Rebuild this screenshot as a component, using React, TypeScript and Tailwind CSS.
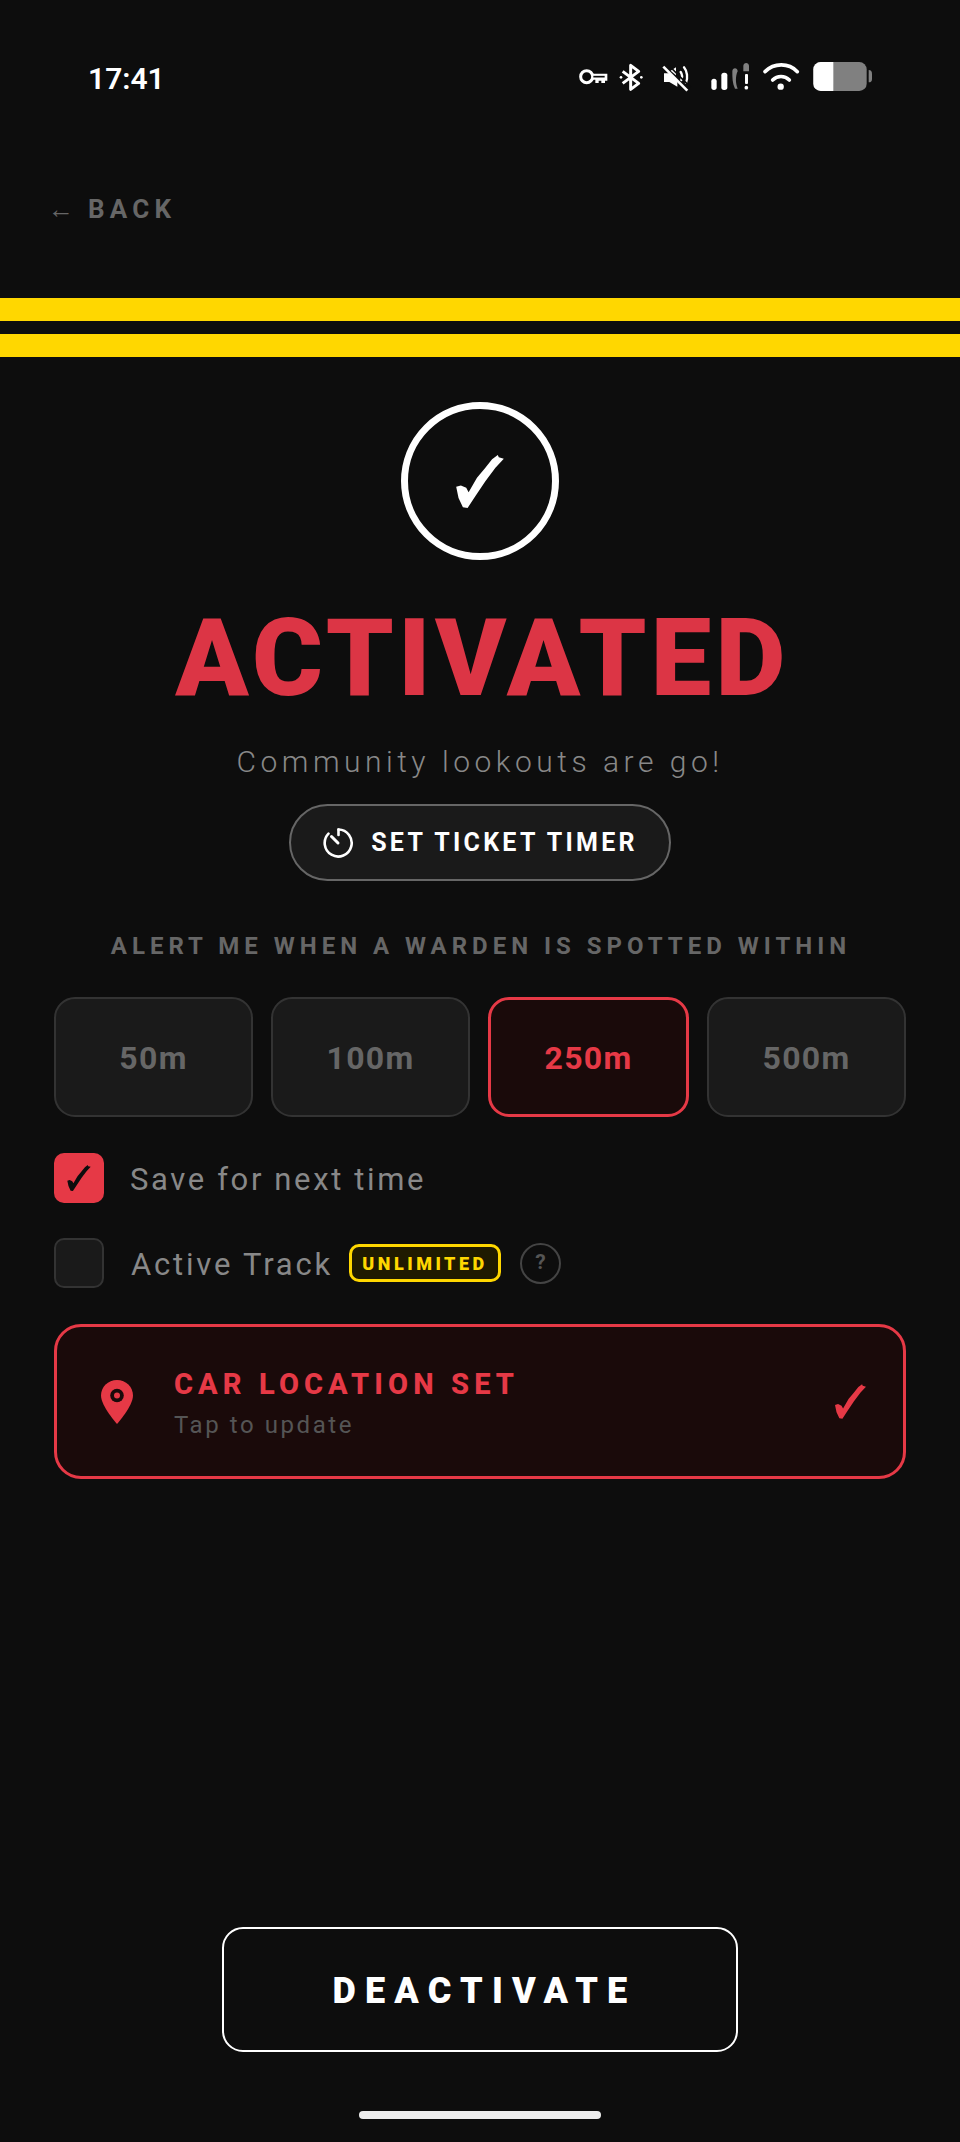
const red = "#e63946";

function StatusIcons() {
  return (
    <svg width="330" height="60" viewBox="0 0 990 180" fill="none">
      {/* key */}
      <circle cx="80" cy="80" r="18" stroke="#fff" strokeWidth="9" />
      <path d="M98 71H142V92H135V99H124V92H116V99H106V89H98Z" fill="#fff" />
      <path d="M100 80H134" stroke="#0d0d0d" strokeWidth="5" />
      {/* bluetooth */}
      <path d="M188 64L236 100L212 118V46L236 64L188 100" stroke="#fff" strokeWidth="9" strokeLinejoin="round" />
      <circle cx="183" cy="82" r="4" fill="#fff" />
      <circle cx="244" cy="82" r="4" fill="#fff" />
      {/* muted */}
      <path d="M312 70H328L352 94V110L328 96H312Z" fill="#fff" />
      <path d="M332 62L348 52V76Z" fill="#fff" />
      <path d="M362 66C366 72 367 82 364 90M372 52C382 64 384 84 378 98" stroke="#fff" strokeWidth="7" strokeLinecap="round" />
      <path d="M310 50L382 122" stroke="#fff" strokeWidth="8" />
      <path d="M322 42L392 112" stroke="#0d0d0d" strokeWidth="5" />
      {/* signal */}
      <rect x="454" y="86" width="16" height="34" rx="8" fill="#fff" />
      <rect x="484" y="68" width="18" height="52" rx="8" fill="#fff" />
      <path d="M517 64C517 52 533 52 533 64C526 78 526 100 533 116H525C517 100 517 82 517 64Z" fill="#808080" />
      <path d="M550 48C550 36 567 36 567 48V64H550Z" fill="#808080" />
      <rect x="555" y="72" width="9" height="30" rx="3" fill="#fff" />
      <circle cx="559" cy="113" r="5.5" fill="#fff" />
      {/* wifi */}
      <path d="M615 65C642 38 686 38 712 65M638 90C652 76 674 76 688 90" stroke="#fff" strokeWidth="11" strokeLinecap="round" />
      <circle cx="662" cy="110" r="9.5" fill="#fff" />
      {/* battery */}
      <rect x="760" y="36" width="160" height="87" rx="22" fill="#808080" />
      <path d="M782 36H820V123H782A22 22 0 0 1 760 101V58A22 22 0 0 1 782 36Z" fill="#fff" />
      <path d="M926 60C933 60 936 64 936 72V86C936 94 933 97 926 97Z" fill="#808080" />
    </svg>
  );
}

function TimerIcon() {
  return (
    <svg width="32" height="32" viewBox="0 0 32 32" fill="none">
      <path d="M16.5 2.5A13.5 13.5 0 1 1 6.5 6.6" stroke="#fff" strokeWidth="2.6" strokeLinecap="round" />
      <path d="M16.5 2.5V8" stroke="#fff" strokeWidth="2.6" strokeLinecap="round" />
      <path d="M9.5 9.5L16 16" stroke="#fff" strokeWidth="3" strokeLinecap="round" />
    </svg>
  );
}

function PinIcon() {
  return (
    <svg width="32" height="44" viewBox="0 0 32 44" className="shrink-0">
      <path d="M16 0C7 0 0 7 0 15.500C0 26 16 44 16 44S32 26 32 15.500C32 7 25 0 16 0Z" fill={red} />
      <circle cx="16" cy="15.500" r="6.800" fill="#1a0a0a" />
      <circle cx="16" cy="15.500" r="3" fill={red} />
    </svg>
  );
}

// brush style tick, the font's own glyph is too thin
function Tick({ color, width, height }: { color: string; width: number; height: number }) {
  return (
    <svg width={width} height={height} viewBox="48 47 142 158" className="shrink-0">
      <path d="M172 47L175 54L190 58L165 85L135 125L105 170L82 205L68 203L55 175L48 142L62 138L78 145L85 158L110 115L135 85L155 60Z" fill={color} />
    </svg>
  );
}

function Distance({ label, active }: { label: string; active?: boolean }) {
  return (
    <button className={`flex h-[120px] flex-1 basis-0 items-center justify-center rounded-[21px] pt-[2px] text-[32px] font-bold tracking-[0.04em] ${active ? "border-[3px] border-[#e63946] bg-[#1a0a0a] text-[#e63946]" : "border-[2px] border-[#333] bg-[#1a1a1a] text-[#666]"}`}>
      {label}
    </button>
  );
}

export default function App() {
  return (
    <div className="flex h-[2142px] w-[960px] flex-col overflow-hidden bg-[#0d0d0d] font-['Roboto',sans-serif]">
      <div className="flex items-center justify-between pt-[50px] pr-[70px] pl-[88px]">
        <span className="mb-[3px] text-[30px] leading-none font-semibold text-white">17:41</span>
        <StatusIcons />
      </div>

      <div className="mt-[80px] flex h-[36px] items-center pt-[2px] pl-[48px] text-[26px] font-bold tracking-[0.2em] text-[#666]">
        <span className="mr-[14px] font-normal tracking-normal">←</span>
        <span>BACK</span>
      </div>

      <div className="mt-[72px] flex flex-col gap-[13px]">
        <div className="h-[23px] bg-[#ffd700]" />
        <div className="h-[23px] bg-[#ffd700]" />
      </div>

      <div className="mt-[45px] flex flex-col items-center">
        <div className="flex h-[158px] w-[158px] items-center justify-center rounded-full border-[7px] border-white">
          <Tick color="#fff" width={48} height={53} />
        </div>
        <h1 className="mt-[44px] ml-[5px] text-[108px] leading-[108px] font-black tracking-[0.04em] text-[#dc3545]">ACTIVATED</h1>
        <p className="mt-[32px] text-[30px] leading-[36px] font-light tracking-[0.15em] text-[#888]">Community lookouts are go!</p>
        <button className="mt-[24px] flex h-[77px] w-[382px] items-center justify-center gap-[17px] rounded-full border-[2px] border-[#666] bg-[#1a1a1a] pt-[1px] text-[25px] font-bold tracking-[0.13em] text-white">
          <TimerIcon />
          <span>SET TICKET TIMER</span>
        </button>
        <p className="mt-[50px] ml-[2px] text-[24px] leading-[30px] font-bold tracking-[0.208em] text-[#666]">ALERT ME WHEN A WARDEN IS SPOTTED WITHIN</p>
      </div>

      <div className="mt-[36px] flex flex-col px-[54px]">
        <div className="flex gap-[18px]">
          <Distance label="50m" />
          <Distance label="100m" />
          <Distance label="250m" active />
          <Distance label="500m" />
        </div>

        <div className="mt-[36px] flex items-center gap-[26px]">
          <div className="flex h-[50px] w-[50px] items-center justify-center rounded-[10px] bg-[#e63946]">
            <Tick color="#0d0d0d" width={24} height={26} />
          </div>
          <span className="pt-[2px] text-[31px] leading-none tracking-[0.085em] text-[#888]">Save for next time</span>
        </div>

        <div className="mt-[35px] flex items-center">
          <div className="h-[50px] w-[50px] rounded-[10px] border-[2px] border-[#333] bg-[#1a1a1a]" />
          <span className="ml-[27px] pt-[2px] text-[31px] leading-none tracking-[0.09em] text-[#888]">Active Track</span>
          <span className="ml-[16px] flex h-[38px] w-[152px] items-center justify-center rounded-[10px] border-[3px] border-[#ffd700] bg-[#1f1a00] text-[18px] font-black tracking-[0.195em] text-[#ffd700]">UNLIMITED</span>
          <span className="ml-[19px] flex h-[41px] w-[41px] items-center justify-center rounded-full border-[2px] border-[#444] text-[21px] font-bold text-[#555]">?</span>
        </div>

        <div className="mt-[36px] flex h-[155px] items-center rounded-[27px] border-[3px] border-[#e63946] bg-[#1a0a0a] pr-[37px] pl-[44px]">
          <PinIcon />
          <div className="ml-[41px] flex flex-col pt-[2px]">
            <span className="text-[29px] leading-[36px] font-extrabold tracking-[0.176em] text-[#e63946]">CAR LOCATION SET</span>
            <span className="mt-[8px] text-[24px] leading-[30px] tracking-[0.107em] text-[#555]">Tap to update</span>
          </div>
          <div className="ml-auto">
            <Tick color={red} width={31} height={35} />
          </div>
        </div>
      </div>

      <div className="mt-auto flex flex-col items-center pb-[23px]">
        <button className="flex h-[125px] w-[516px] items-center justify-center rounded-[21px] border-[2px] border-white bg-[#0d0d0d] pt-[3px] pl-[9px] text-[36px] font-black tracking-[0.255em] text-white">
          DEACTIVATE
        </button>
        <div className="mt-[59px] h-[8px] w-[242px] rounded-full bg-[#eee]" />
      </div>
    </div>
  );
}
